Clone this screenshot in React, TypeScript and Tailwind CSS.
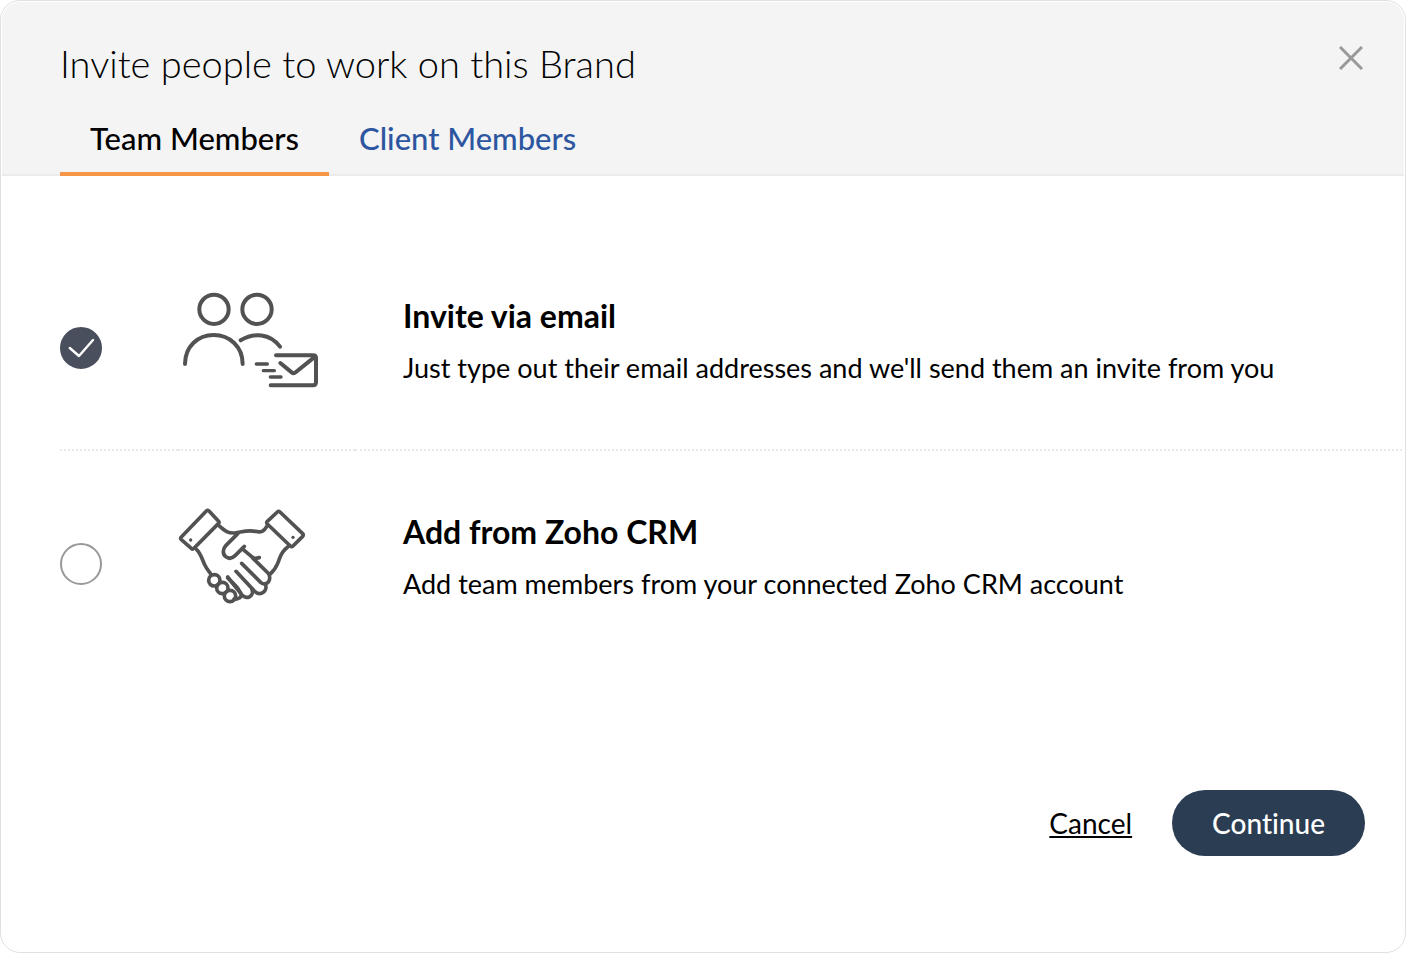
import { useState } from "react";
import type { ReactNode } from "react";

function PeopleMailIcon() {
  return (
    <svg viewBox="0 0 480 360" className="h-[120px] w-40 shrink-0" fill="none" stroke="#525252" strokeWidth="12" strokeLinecap="round" strokeLinejoin="round" aria-hidden="true">
      <circle cx="132" cy="88" r="44" />
      <circle cx="261" cy="88" r="44" />
      <path d="M45 252C45 200 83 165 131 165S218 200 218 252" />
      <path d="M212 181C252 157 300 160 330 200" />
      <path d="M318 226H429Q438 226 438 235V307Q438 316 429 316H302" />
      <path d="M331 249L365 277Q371 282 377 277L436 229" />
      <path d="M259 252H292M280 272H313M301 291H333" strokeWidth="10" />
    </svg>
  );
}

function HandshakeIcon() {
  return (
    <svg viewBox="0 0 435 336" className="h-28 w-[145px] shrink-0" fill="none" stroke="#525252" strokeWidth="11" strokeLinecap="round" strokeLinejoin="round" aria-hidden="true">
      <path d="M109 33Q113 29 117 33L145 63Q149 67 145 71L72 145Q68 149 64 145L34 119Q30 115 34 111Z" />
      <path d="M322 36Q326 32 330 36L398 101Q402 105 398 109L369 138Q365 142 361 138L292 72Q288 68 292 64Z" />
      <circle cx="62" cy="120" r="5" fill="#525252" stroke="none" />
      <circle cx="369" cy="112" r="5" fill="#525252" stroke="none" />
      <path d="M146 76C166 94 174 100 195 99C220 95 232 90 256 94C275 99 282 93 292 77" />
      <path d="M204 100L168 136C158 146 157 162 167 170C177 178 188 174 196 166L223 139" />
      <path d="M219 148L245 170Q251 176 258 175L268 173" />
      <path d="M80 149C92 160 96 177 104 194C108 204 115 212 121 220" />
      <path d="M354 140C329 158 331 174 323 190C317 205 308 216 299 224" />
      <path d="M249 175L294 219C301 226 301 240 294 247C288 253 279 253 272 247L215 190" />
      <path d="M286 253C290 262 287 272 280 277C272 283 262 281 255 275L198 214" />
      <path d="M246 270C250 278 245 287 238 291C230 294 221 291 215 284L173 231" />
      <path d="M214 287C211 294 201 298 192 297" />
      <path d="M173 234L190 250C201 260 207 268 212 279" />
      <circle cx="133" cy="241" r="17" />
      <circle cx="157" cy="264" r="17" />
      <circle cx="180" cy="288" r="17" />
    </svg>
  );
}

interface OptionProps {
  id: string;
  title: string;
  text: string;
  icon: ReactNode;
  checked: boolean;
  divided?: boolean;
  onSelect: () => void;
}

function Option({ id, title, text, icon, checked, divided, onSelect }: OptionProps) {
  const line = divided ? "border-b-2 border-dotted border-[#e9e9e9]" : "border-b-2 border-transparent";
  return (
    <label htmlFor={id} className="grid h-54 cursor-pointer grid-cols-[118px_177px_1fr]">
      <span className={`flex items-center pt-3 ${line}`}>
        <span className="grid">
          <input
            id={id}
            type="radio"
            name="invite-method"
            checked={checked}
            onChange={onSelect}
            className="peer col-start-1 row-start-1 size-[42px] appearance-none rounded-full border-2 border-[#999] bg-white checked:border-[#494f5c] checked:bg-[#494f5c]"
          />
          <svg viewBox="0 0 42 42" className="pointer-events-none invisible col-start-1 row-start-1 size-[42px] peer-checked:visible" fill="none" stroke="white" strokeWidth="2.4" strokeLinecap="round" strokeLinejoin="round" aria-hidden="true">
            <path d="M9.800 21L19 29L33 13" />
          </svg>
        </span>
      </span>
      <span className={`flex items-center pb-1 ${line}`}>
        <span className="-ml-2 flex">{icon}</span>
      </span>
      <span className={`flex flex-col justify-center gap-3 pl-12 ${line}`}>
        <span className="text-[32px] leading-10 font-bold">{title}</span>
        <span className="text-[27px] leading-10">{text}</span>
      </span>
    </label>
  );
}

export default function App() {
  const [tab, setTab] = useState("team");
  const [method, setMethod] = useState("email");
  const tabBase = "border-b-4 px-[30px] pb-3.5 text-[31px] leading-10 font-medium";
  return (
    <div
      role="dialog"
      aria-labelledby="invite-title"
      className="flex min-h-screen flex-col rounded-[20px] border border-[#e0e0e0] bg-white p-px font-[Lato,sans-serif] text-black [font-variant-ligatures:none]"
    >
      <header className="rounded-t-[18px] border-b-2 border-[#ebebeb] bg-[#f4f4f4] pr-[37px] pl-[58px]">
        <div className="flex items-start justify-between pt-9">
          <h1 id="invite-title" className="text-[38px] leading-[50px] font-light">
            Invite people to work on this Brand
          </h1>
          <button type="button" aria-label="Close" className="mt-1 flex size-8 items-center justify-center">
            <svg viewBox="0 0 24 24" className="size-6" fill="none" stroke="#999" strokeWidth="3" aria-hidden="true">
              <path d="M1 1L23 23M23 1L1 23" />
            </svg>
          </button>
        </div>
        <div role="tablist" className="-mb-0.5 flex pt-[30px]">
          <button
            type="button"
            role="tab"
            aria-selected={tab === "team"}
            onClick={() => setTab("team")}
            className={`${tabBase} ${tab === "team" ? "border-[#f79646] text-black" : "border-transparent text-[#2c56a0]"}`}
          >
            Team Members
          </button>
          <button
            type="button"
            role="tab"
            aria-selected={tab === "client"}
            onClick={() => setTab("client")}
            className={`${tabBase} ${tab === "client" ? "border-[#f79646] text-black" : "border-transparent text-[#2c56a0]"}`}
          >
            Client Members
          </button>
        </div>
      </header>
      <main className="pt-[59px] pr-0.5 pl-[58px]">
        <Option
          id="invite-email"
          title="Invite via email"
          text="Just type out their email addresses and we'll send them an invite from you"
          icon={<PeopleMailIcon />}
          checked={method === "email"}
          divided
          onSelect={() => setMethod("email")}
        />
        <Option
          id="invite-crm"
          title="Add from Zoho CRM"
          text="Add team members from your connected Zoho CRM account"
          icon={<HandshakeIcon />}
          checked={method === "crm"}
          onSelect={() => setMethod("crm")}
        />
      </main>
      <footer className="mt-auto flex items-center justify-end gap-10 pt-10 pr-[39px] pb-[95px]">
        <button type="button" className="text-[28px] leading-10 underline">
          Cancel
        </button>
        <button type="button" className="rounded-full bg-[#2a3d52] px-10 py-[13px] text-[28px] leading-10 font-medium text-white">
          Continue
        </button>
      </footer>
    </div>
  );
}
